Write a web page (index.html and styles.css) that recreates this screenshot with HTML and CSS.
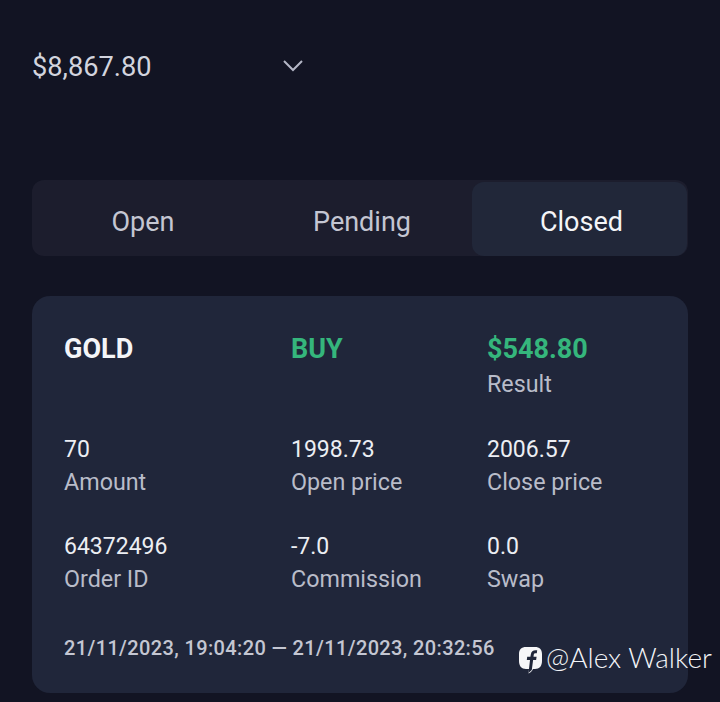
FILE: index.html
```html
<!DOCTYPE html>
<html lang="en">
  <head>
    <meta charset="UTF-8" />
    <meta name="viewport" content="width=device-width, initial-scale=1.0" />
    <link rel="stylesheet" href="styles.css">
    <title>Closed orders</title>
  </head>
  <body>
    <section class="balance">
      <span class="balance-value">$8,867.80</span>
      <svg class="chevron" width="22" height="14" viewBox="0 0 22 14" aria-hidden="true">
        <path d="M2 3 L11 12 L20 3" fill="none" stroke="#b4b7c6" stroke-width="2" />
      </svg>
    </section>

    <nav class="tabs">
      <div class="tab tab-open">Open</div>
      <div class="tab">Pending</div>
      <div class="tab tab-active">Closed</div>
    </nav>

    <section class="order">
      <div class="order-grid">
        <div class="cell">
          <div class="symbol">GOLD</div>
        </div>
        <div class="cell">
          <div class="symbol green">BUY</div>
        </div>
        <div class="cell">
          <div class="symbol green">$548.80</div>
          <div class="label">Result</div>
        </div>
        <div class="cell">
          <div class="value">70</div>
          <div class="label">Amount</div>
        </div>
        <div class="cell">
          <div class="value">1998.73</div>
          <div class="label">Open price</div>
        </div>
        <div class="cell">
          <div class="value">2006.57</div>
          <div class="label">Close price</div>
        </div>
        <div class="cell">
          <div class="value">64372496</div>
          <div class="label">Order ID</div>
        </div>
        <div class="cell">
          <div class="value">-7.0</div>
          <div class="label">Commission</div>
        </div>
        <div class="cell">
          <div class="value">0.0</div>
          <div class="label">Swap</div>
        </div>
      </div>
      <div class="dates">21/11/2023, 19:04:20 — 21/11/2023, 20:32:56</div>
    </section>

    <!-- watermark sits over the card -->
    <div class="watermark">
      <svg class="watermark-icon" width="25" height="28" viewBox="0 0 25 28" aria-hidden="true">
        <path d="M8 1 H17 C21.500 1 24 3.500 24 8 V15 C24 20 21.500 23 17 23 H15 C14 25 12.500 26.500 10.500 27.500 L11 23 H8 C3.500 23 1 20 1 15 V8 C1 3.500 3.500 1 8 1 Z" fill="#f6f6f8" />
        <path d="M10.500 27 L12 14 H8.800 L9.200 10.800 H12.400 L12.800 8.500 C13.300 5.500 15 4.200 17.500 4.200 H19.200 L18.800 7.300 H17.500 C16.300 7.300 15.900 7.900 15.700 9 L15.500 10.800 H18.600 L18.100 14 H15.100 L13.800 24 Z" fill="#20263a" />
      </svg>
      <span>@Alex Walker</span>
    </div>
  </body>
</html>
```

FILE: styles.css
```css
body {
  position: relative;
  margin: 0;
  padding: 0 32px;
  height: 702px;
  box-sizing: border-box;
  overflow: hidden;
  background-color: #121423;
  font-family: Roboto, "Liberation Sans", sans-serif;
}

.balance {
  display: flex;
  align-items: center;
  justify-content: space-between;
  width: 272px;
  padding-top: 51px;
  height: 32px;
}

.balance-value {
  font-size: 27.200px;
  line-height: 32px;
  color: #d2d4de;
}

.chevron {
  margin-top: -5px;
}

.tabs {
  display: flex;
  margin-top: 97px;
  height: 76px;
  border-radius: 12px;
  background-color: #1c1d2d;
}

.tab {
  display: flex;
  flex: 0 0 220px;
  box-sizing: border-box;
  align-items: center;
  justify-content: center;
  padding-top: 8px;
  font-size: 27px;
  color: #c4c6d2;
}

.tab-open {
  padding-left: 2px;
}

.tab-active {
  flex: 0 0 215px;
  margin-top: 2px;
  padding-top: 6px;
  padding-left: 4px;
  border-radius: 12px;
  background-color: #212739;
  color: #f4f5f8;
}

.order {
  margin-top: 40px;
  height: 397px;
  padding: 35px 32px 0;
  box-sizing: border-box;
  border-radius: 18px;
  background-color: #20263a;
}

.order-grid {
  display: grid;
  grid-template-columns: 227px 196px 1fr;
  row-gap: 33px;
}

.symbol {
  margin-bottom: 1px;
  font-size: 27px;
  font-weight: 700;
  line-height: 36px;
  color: #f4f5f8;
}

.symbol + .label {
  margin-bottom: 1px;
}

.green {
  color: #35b67c;
}

.value {
  font-size: 23px;
  line-height: 32px;
  color: #eceef3;
}

.label {
  font-size: 23.300px;
  line-height: 32px;
  color: #b9bcc9;
}

.dates {
  margin-top: 39px;
  font-size: 20px;
  font-weight: 500;
  line-height: 28px;
  letter-spacing: 0.370px;
  color: #c4c6d2;
}

.watermark {
  position: absolute;
  left: 518px;
  top: 640px;
  display: flex;
  align-items: center;
  gap: 3px;
  font-family: Lato, sans-serif;
  font-size: 28px;
  font-weight: 300;
  color: #f4f5f8;
}

.watermark-icon {
  margin-top: 6px;
}
```
